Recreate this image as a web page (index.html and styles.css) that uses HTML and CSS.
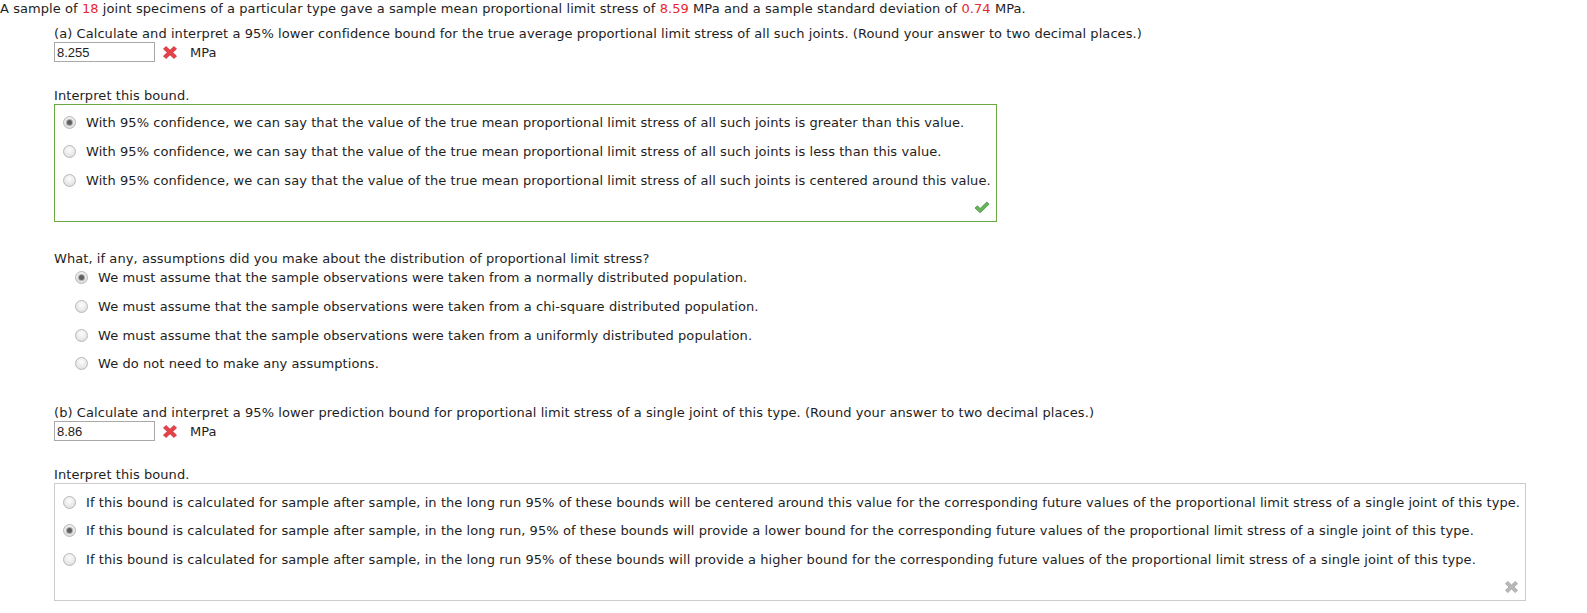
FILE: index.html
```html
<!DOCTYPE html>
<html lang="en">
<head>
  <meta charset="UTF-8">
  <title>Proportional limit stress</title>
  <link rel="stylesheet" href="styles.css">
</head>
<body>
  <p class="intro">A sample of <span class="num">18</span> joint specimens of a particular type gave a sample mean proportional limit stress of <span class="num">8.59</span> MPa and a sample standard deviation of <span class="num">0.74</span> MPa.</p>

  <div class="question">
    <!-- part a -->
    <p class="part">(a) Calculate and interpret a 95% lower confidence bound for the true average proportional limit stress of all such joints. (Round your answer to two decimal places.)</p>
    <div class="answer-row">
      <input class="answer" type="text" value="8.255">
      <svg class="mark-x" viewBox="0 0 16 15" width="16" height="15"><path d="M1.5 4 L4 1.5 L8 5.3 L12 1.5 L14.5 4 L10.6 7.5 L14.5 11 L12 13.5 L8 9.7 L4 13.5 L1.5 11 L5.4 7.5 Z" fill="#e5434a" stroke="#cc2a31" stroke-width="0.8" stroke-linejoin="round"/></svg>
      <span class="unit">MPa</span>
    </div>

    <p class="prompt">Interpret this bound.</p>
    <div class="choice-box correct">
      <div class="option"><span class="radio checked"></span>With 95% confidence, we can say that the value of the true mean proportional limit stress of all such joints is greater than this value.</div>
      <div class="option"><span class="radio"></span>With 95% confidence, we can say that the value of the true mean proportional limit stress of all such joints is less than this value.</div>
      <div class="option"><span class="radio"></span>With 95% confidence, we can say that the value of the true mean proportional limit stress of all such joints is centered around this value.</div>
      <div class="box-mark">
        <svg viewBox="0 0 16 13" width="16" height="13"><path d="M1 7 L3.4 4.8 L6.2 7.4 L12.8 1 L15 3.2 L6.2 11.8 Z" fill="#69b45a" stroke="#449140" stroke-width="0.8" stroke-linejoin="round"/></svg>
      </div>
    </div>

    <p class="prompt assume">What, if any, assumptions did you make about the distribution of proportional limit stress?</p>
    <div class="choice-list">
      <div class="option"><span class="radio checked"></span>We must assume that the sample observations were taken from a normally distributed population.</div>
      <div class="option"><span class="radio"></span>We must assume that the sample observations were taken from a chi-square distributed population.</div>
      <div class="option"><span class="radio"></span>We must assume that the sample observations were taken from a uniformly distributed population.</div>
      <div class="option"><span class="radio"></span>We do not need to make any assumptions.</div>
    </div>

    <!-- part b -->
    <p class="part part-b">(b) Calculate and interpret a 95% lower prediction bound for proportional limit stress of a single joint of this type. (Round your answer to two decimal places.)</p>
    <div class="answer-row">
      <input class="answer" type="text" value="8.86">
      <svg class="mark-x" viewBox="0 0 16 15" width="16" height="15"><path d="M1.5 4 L4 1.5 L8 5.3 L12 1.5 L14.5 4 L10.6 7.5 L14.5 11 L12 13.5 L8 9.7 L4 13.5 L1.5 11 L5.4 7.5 Z" fill="#e5434a" stroke="#cc2a31" stroke-width="0.8" stroke-linejoin="round"/></svg>
      <span class="unit">MPa</span>
    </div>

    <p class="prompt">Interpret this bound.</p>
    <div class="choice-box neutral">
      <div class="option"><span class="radio"></span>If this bound is calculated for sample after sample, in the long run 95% of these bounds will be centered around this value for the corresponding future values of the proportional limit stress of a single joint of this type.</div>
      <div class="option"><span class="radio checked"></span>If this bound is calculated for sample after sample, in the long run, 95% of these bounds will provide a lower bound for the corresponding future values of the proportional limit stress of a single joint of this type.</div>
      <div class="option"><span class="radio"></span>If this bound is calculated for sample after sample, in the long run 95% of these bounds will provide a higher bound for the corresponding future values of the proportional limit stress of a single joint of this type.</div>
      <div class="box-mark">
        <svg viewBox="0 0 16 15" width="15" height="14"><path d="M1.5 4 L4 1.5 L8 5.3 L12 1.5 L14.5 4 L10.6 7.5 L14.5 11 L12 13.5 L8 9.7 L4 13.5 L1.5 11 L5.4 7.5 Z" fill="#b8b8b8" stroke="#a0a0a0" stroke-width="0.8" stroke-linejoin="round"/></svg>
      </div>
    </div>
  </div>
</body>
</html>
```

FILE: styles.css
```css
html, body {
  margin: 0;
  padding: 0;
  background: #fff;
  color: #1e1e1e;
  font-family: 'DejaVu Sans', Verdana, sans-serif;
  font-size: 13px;
  letter-spacing: 0.07px;
}
p {
  margin: 0;
  line-height: 16px;
}
.num {
  color: #e8262d;
}
.intro {
  padding-top: 1px;
}
.question {
  margin-left: 54px;
}
.part {
  margin-top: 9px;
}
.part-b {
  margin-top: 27px;
}
.answer-row {
  display: flex;
  align-items: center;
  height: 20px;
}
.answer {
  width: 101px;
  height: 20px;
  box-sizing: border-box;
  border: 1px solid #a9a9a9;
  padding: 0 2px;
  margin: 0;
  font-family: 'Liberation Sans', Arial, sans-serif;
  font-size: 13px;
  letter-spacing: 0;
  color: #222;
}
.mark-x {
  margin-left: 7px;
}
.unit {
  margin-left: 12px;
}
.prompt {
  margin-top: 26px;
  margin-bottom: 0;
}
.prompt.assume {
  margin-top: 30px;
  line-height: 14px;
}
.choice-box {
  display: inline-block;
  padding: 3.5px 5px 0 8px;
  border: 1px solid #ccc;
}
.choice-box.correct {
  border-color: #6aa843;
}
.option {
  display: flex;
  align-items: center;
  height: 28.7px;
}
.radio {
  width: 11px;
  height: 11px;
  border-radius: 50%;
  border: 1px solid #b8b8b8;
  background: radial-gradient(circle at 50% 35%, #fdfdfd 0%, #e6e6e6 65%, #d2d2d2 100%);
  margin-right: 10px;
  flex: none;
  position: relative;
}
.radio.checked::after {
  content: '';
  position: absolute;
  left: 3px;
  top: 3px;
  width: 5px;
  height: 5px;
  border-radius: 50%;
  background: #5f5f5f;
  box-shadow: 0 0 1px 1px #a8a8a8;
}
.choice-list {
  margin-top: -2px;
  padding-left: 21px;
}
.box-mark {
  display: flex;
  justify-content: flex-end;
  align-items: center;
  height: 26px;
  padding-right: 1px;
}
```
